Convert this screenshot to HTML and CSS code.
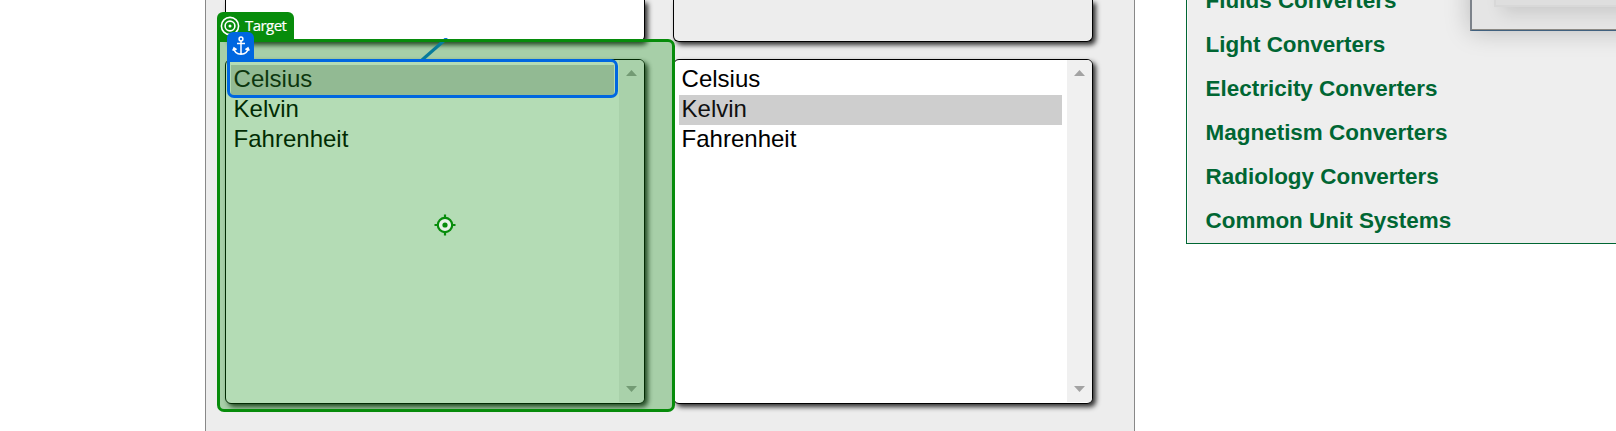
FILE: index.html
```
<!DOCTYPE html>
<html lang="en">
<head>
<meta charset="utf-8">
<title>Unit Converter</title>
<link rel="stylesheet" href="styles.css">
</head>
<body>
<div class="page">
  <main class="converter">
    <div class="panel field"></div>
    <div class="panel field result"></div>
    <div class="panel list">
      <ul class="options">
        <li class="selected">Celsius</li>
        <li>Kelvin</li>
        <li>Fahrenheit</li>
      </ul>
      <div class="scrollbar"><i class="up"></i><i class="down"></i></div>
    </div>
    <div class="panel list">
      <ul class="options">
        <li>Celsius</li>
        <li class="selected">Kelvin</li>
        <li>Fahrenheit</li>
      </ul>
      <div class="scrollbar"><i class="up"></i><i class="down"></i></div>
    </div>
  </main>
  <aside class="sidebar">
    <ul class="links">
      <li>Fluids Converters</li>
      <li>Light Converters</li>
      <li>Electricity Converters</li>
      <li>Magnetism Converters</li>
      <li>Radiology Converters</li>
      <li>Common Unit Systems</li>
    </ul>
  </aside>
  <div class="popup"><div class="popup-inner"></div></div>
  <svg class="connector" width="30" height="26" viewBox="0 0 30 26"><path d="M2 22 27 0" stroke="#0a76da" stroke-width="3.2"/></svg>
  <div class="target-area"></div>
  <div class="target-label">
    <svg width="20" height="20" viewBox="0 0 20 20" fill="none" stroke="#fff" stroke-width="1.6"><circle cx="10" cy="10" r="8.6"/><circle cx="10" cy="10" r="4.9"/><circle cx="10" cy="10" r="1.5" fill="#fff" stroke="none"/></svg>
    <span>Target</span>
  </div>
  <div class="anchor-area"></div>
  <div class="anchor-tag">
    <svg width="18" height="20" viewBox="0 0 18 20" fill="none" stroke="#fff" stroke-width="1.5"><circle cx="9" cy="3" r="1.9"/><path d="M9 5V18M5 7.6H13M2 12.2C2.2 16 5 18 9 18.2 13 18 15.8 16 16 12.2M.8 14.6 2 11.8 4.6 13.6M17.2 14.6 16 11.8 13.4 13.6"/></svg>
  </div>
  <svg class="crosshair" width="22" height="22" viewBox="0 0 22 22" fill="none" stroke="#078c0b" stroke-width="2.2"><circle cx="11" cy="11" r="7.2" fill="#e6f2e6"/><path d="M11 .5V4M11 18V21.5M.5 11H4M18 11H21.5"/><circle cx="11" cy="11" r="2.6" fill="#078c0b" stroke="none"/></svg>
</div>
</body>
</html>
```
FILE: styles.css
```
* { box-sizing: border-box; }
body { margin: 0; background: #fff; font-family: "Liberation Sans", Arial, sans-serif; }
ul { list-style: none; margin: 0; padding: 0; }
.page { position: relative; display: flex; align-items: flex-start; width: 1616px; height: 431px; overflow: hidden; }
.converter {
  display: grid; grid-template-columns: 420px 420px; grid-template-rows: 42px 345px;
  gap: 17px 28px; width: 930px; height: 431px; flex: none; margin-left: 205px; padding-left: 19px;
  background: #ededed; border: solid #888; border-width: 0 1px;
}
.panel { background: #fff; border: 1px solid #000; border-radius: 6px; box-shadow: 3px 3px 5px rgba(0, 0, 0, .8); }
.field { border-top: 0; border-radius: 0 0 6px 6px; }
.result { background: #ededed; }
.list { display: flex; overflow: hidden; }
.options { flex: 1; padding: 5px; font-size: 24px; line-height: 28px; color: #000; }
.options li { height: 30px; padding-left: 2.6px; }
.options .selected { background: #cecece; color: #101010; }
.scrollbar { display: flex; flex-direction: column; justify-content: space-between; align-items: center; width: 25px; height: 342px; padding: 10px 0; background: #f0f0f0; }
.scrollbar i { width: 11px; height: 6px; background: #a3a3a3; }
.up { clip-path: polygon(50% 0, 100% 100%, 0 100%); }
.down { clip-path: polygon(0 0, 100% 0, 50% 100%); }
.sidebar {
  display: flex; flex-direction: column; justify-content: flex-end; width: 440px; height: 244px; flex: none;
  margin-left: 51px; padding: 0 0 0 18.6px; overflow: hidden; background: #eee;
  border: 1px solid #006633; border-top: 0; box-shadow: inset 1px 0 #fafafa;
}
.links { font-size: 22.45px; font-weight: bold; line-height: 44px; color: #006633; }
.links li { height: 44px; }
.popup {
  position: absolute; left: 1470px; top: -100px; width: 170px; height: 131px;
  background: #e5e5e5; border: 2px solid #7c828a; border-bottom: 1px solid #41617f;
  box-shadow: inset 0 -1px #8b8984, 0 0 24px rgba(0, 0, 0, .22);
}
.popup-inner { width: 160px; height: 105px; margin: 0 0 0 22px; background: #dedede; border: 2px solid #d8d8d8; box-shadow: 8px 6px 16px rgba(0, 0, 0, .12); }
.connector { position: absolute; left: 420px; top: 38px; }
.target-area { position: absolute; left: 217px; top: 39px; width: 458px; height: 373px; border: 3px solid #078c0b; border-radius: 0 7px 7px 7px; background: rgba(5, 140, 10, .3); }
.target-label {
  position: absolute; left: 217px; top: 12px; display: flex; align-items: center; gap: 5px; width: 77px; height: 28px; padding: 0 0 1px 3px;
  border-radius: 6px 6px 0 0; background: #078c0b; color: #fff; font: 15px/24px "Open Sans", "Noto Sans", sans-serif; letter-spacing: -.55px;
}
.target-label span { padding-bottom: 1px; -webkit-text-stroke: .2px #fff; }
.anchor-area { position: absolute; left: 227px; top: 59px; width: 391px; height: 39px; border: 3px solid #0067e0; border-radius: 0 7px 7px 7px; }
.anchor-tag { position: absolute; left: 227px; top: 32px; display: flex; justify-content: center; padding-top: 4px; width: 27px; height: 28px; border-radius: 6px 6px 0 0; background: #0067e0; }
.crosshair { position: absolute; left: 434px; top: 214px; }
```
